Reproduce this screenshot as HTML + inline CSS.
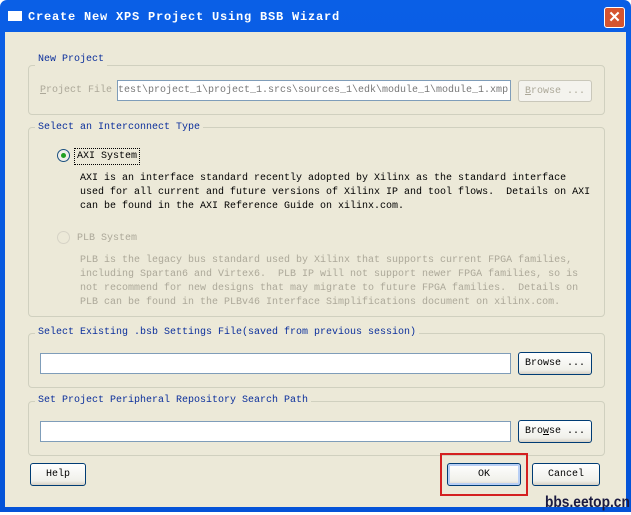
<!DOCTYPE html>
<html><head><meta charset="utf-8"><style>
*{margin:0;padding:0;box-sizing:border-box}
body{width:631px;height:515px;background:#fff;position:relative;overflow:hidden;font-family:"Liberation Mono","Noto Serif CJK SC",monospace;font-size:10px;color:#000}
.a{position:absolute;white-space:pre}
.win{position:absolute;left:0;top:0;width:631px;height:512px;background:linear-gradient(#0a5fe6,#0453d8);border-radius:7px 7px 0 0}
.body{position:absolute;left:5px;top:32px;width:621px;height:475px;background:#ece9d8}
.grp{position:absolute;border:1px solid #d0d0bf;border-radius:4px}
.leg{position:absolute;background:#ece9d8;color:#0b2f9c;padding:0 3px;line-height:12px}
.inp{position:absolute;background:#fff;border:1px solid #7f9db9}
.btn{position:absolute;border:1px solid #003c74;border-radius:3px;background:linear-gradient(#fff,#f0f0ea 80%,#d6d0c5);text-align:center;line-height:21px}
.dis{color:#aca899}
</style></head><body>
<div class="win"></div>
<div class="a" style="left:8px;top:11px;width:14px;height:10px;background:#fff"></div>
<div class="a" style="left:28px;top:10px;color:#fff;font-weight:bold;font-size:12px;letter-spacing:0.8px">Create New XPS Project Using BSB Wizard</div>
<div class="a" style="left:604px;top:7px;width:21px;height:21px;border:1px solid #fff;border-radius:3px;background:#d5542f;color:#fff;font:bold 15px 'Liberation Sans',sans-serif;text-align:center;line-height:19px">✕</div>
<div class="body"></div>

<div class="grp" style="left:28px;top:65px;width:577px;height:50px"></div>
<div class="leg" style="left:35px;top:54px">New Project</div>
<div class="a dis" style="left:40px;top:85px"><u>P</u>roject File</div>
<div class="inp" style="left:117px;top:80px;width:394px;height:21px;background:#fff;"></div>
<div class="a dis" style="left:118px;top:85px;color:#777">test\project_1\project_1.srcs\sources_1\edk\module_1\module_1.xmp</div>
<div class="btn dis" style="left:518px;top:80px;width:74px;height:22px;border-color:#c9c7ba;background:#f4f3ee"><u>B</u>rowse ...</div>

<div class="grp" style="left:28px;top:127px;width:577px;height:190px"></div>
<div class="leg" style="left:35px;top:122px">Select an Interconnect Type</div>
<div class="a" style="left:57px;top:149px;width:13px;height:13px;border:1px solid #1c5180;border-radius:50%;background:#f0f0ea"></div>
<div class="a" style="left:61px;top:153px;width:5px;height:5px;border-radius:50%;background:#21a121"></div>
<div class="a" style="left:74px;top:148px;border:1px dotted #000;padding:2px 2px 1px;line-height:12px">AXI System</div>
<div class="a" style="left:80px;top:172px;line-height:14px">AXI is an interface standard recently adopted by Xilinx as the standard interface
used for all current and future versions of Xilinx IP and tool flows.  Details on AXI
can be found in the AXI Reference Guide on xilinx.com.</div>
<div class="a" style="left:57px;top:231px;width:13px;height:13px;border:1px solid #d6d3c6;border-radius:50%"></div>
<div class="a dis" style="left:77px;top:233px">PLB System</div>
<div class="a dis" style="left:80px;top:254px;line-height:14px">PLB is the legacy bus standard used by Xilinx that supports current FPGA families,
including Spartan6 and Virtex6.  PLB IP will not support newer FPGA families, so is
not recommend for new designs that may migrate to future FPGA families.  Details on
PLB can be found in the PLBv46 Interface Simplifications document on xilinx.com.</div>

<div class="grp" style="left:28px;top:333px;width:577px;height:55px"></div>
<div class="leg" style="left:35px;top:327px">Select Existing .bsb Settings File(saved from previous session)</div>
<div class="inp" style="left:40px;top:353px;width:471px;height:21px"></div>
<div class="btn" style="left:518px;top:352px;width:74px;height:23px">Browse ...</div>

<div class="grp" style="left:28px;top:401px;width:577px;height:55px"></div>
<div class="leg" style="left:35px;top:395px">Set Project Peripheral Repository Search Path</div>
<div class="inp" style="left:40px;top:421px;width:471px;height:21px"></div>
<div class="btn" style="left:518px;top:420px;width:74px;height:23px">Bro<u>w</u>se ...</div>

<div class="btn" style="left:30px;top:463px;width:56px;height:23px">Help</div>
<div class="btn" style="left:447px;top:463px;width:74px;height:23px;box-shadow:inset 0 0 0 2px #b8cff5">OK</div>
<div class="a" style="left:440px;top:453px;width:88px;height:43px;border:2px solid #d42020"></div>
<div class="btn" style="left:532px;top:463px;width:68px;height:23px">Cancel</div>
<div class="a" style="left:545px;top:494px;font:bold 16px 'Liberation Sans',sans-serif;color:#1a1a40;transform:scaleX(0.86);transform-origin:left top">bbs.eetop.cn</div>
</body></html>
